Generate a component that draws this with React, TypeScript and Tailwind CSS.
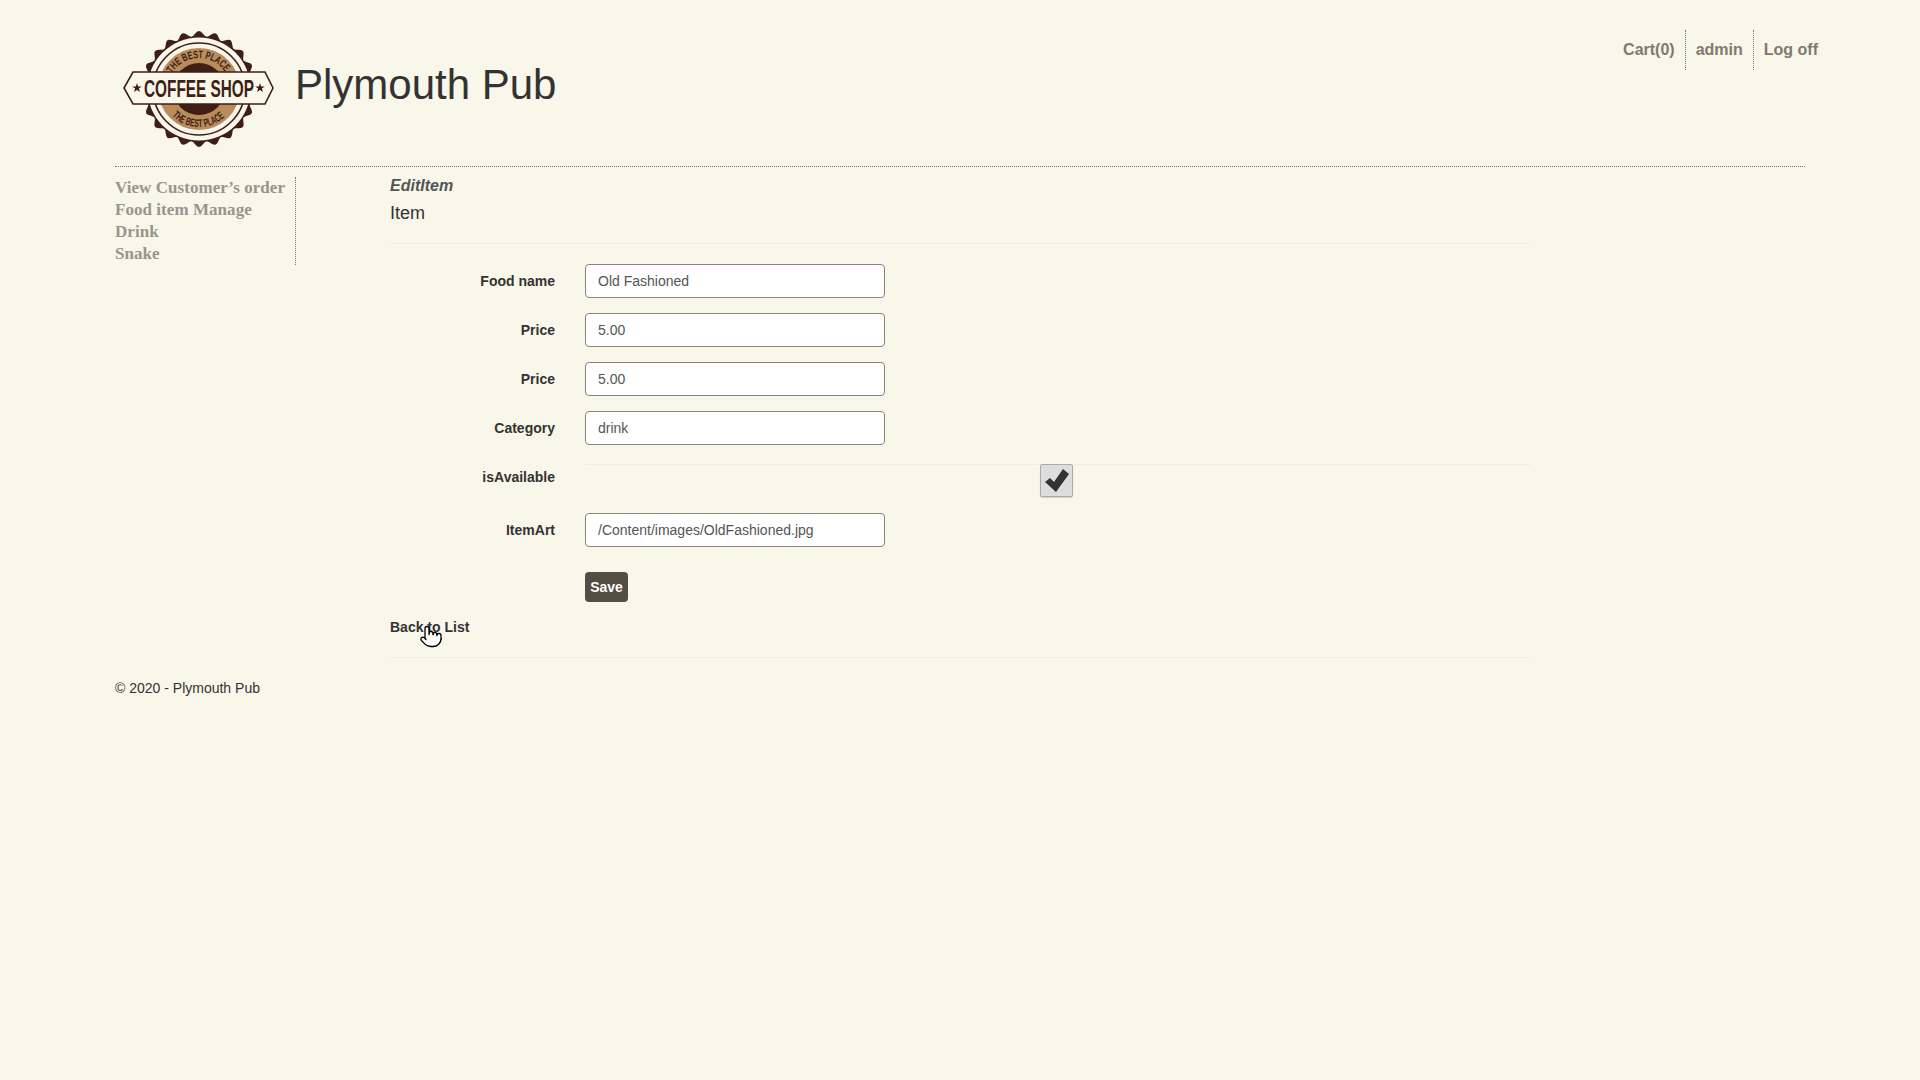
import React from "react";
import { Pointer } from "lucide-react";

const capPoints = () => {
  const pts: string[] = [];
  const teeth = 22;
  const steps = teeth * 8;
  for (let i = 0; i < steps; i++) {
    const a = (i / steps) * Math.PI * 2;
    const r = 55.5 + 2.6 * Math.cos(a * teeth);
    pts.push(`${(79 + r * Math.sin(a)).toFixed(2)},${(61 - r * Math.cos(a)).toFixed(2)}`);
  }
  return pts.join(" ");
};

// five pointed star, used on both ends of the banner
const starPoints = (cx: number, cy: number, r: number) => {
  const pts: string[] = [];
  for (let i = 0; i < 10; i++) {
    const a = (i / 10) * Math.PI * 2;
    const d = i % 2 === 0 ? r : r * 0.4;
    pts.push(`${(cx + d * Math.sin(a)).toFixed(2)},${(cy - d * Math.cos(a)).toFixed(2)}`);
  }
  return pts.join(" ");
};

const Logo = () => (
  <svg width="160" height="124" viewBox="0 0 160 124" className="shrink-0">
    <defs>
      <path id="arc-top" d="M 52.15 45.5 A 31 31 0 0 1 105.85 45.5" />
      <path id="arc-bottom" d="M 52.13 87.87 A 38 38 0 0 0 105.87 87.87" />
    </defs>
    <polygon points={capPoints()} fill="#3f1f15" />
    <circle cx="79" cy="61" r="51.5" fill="#f9f6ea" />
    <circle cx="79" cy="61" r="46" fill="none" stroke="#3f1f15" strokeWidth="1.6" />
    <circle cx="79" cy="61" r="41" fill="#b98c5c" />
    <circle cx="79" cy="61" r="26" fill="#3f1f15" />
    <text fill="#3f1f15" fontSize="11" fontWeight="700" fontFamily="'Liberation Sans', sans-serif">
      <textPath href="#arc-top" textLength="63" lengthAdjust="spacingAndGlyphs">THE BEST PLACE</textPath>
    </text>
    <text fill="#3f1f15" fontSize="11" fontWeight="700" fontFamily="'Liberation Sans', sans-serif">
      <textPath href="#arc-bottom" textLength="58" lengthAdjust="spacingAndGlyphs">THE BEST PLACE</textPath>
    </text>
    <polygon points="4,60 13,44 145,44 153,60 145,76 13,76" fill="#f9f6ea" stroke="#3f1f15" strokeWidth="1.6" />
    <text transform="translate(79 69) scale(0.64 1)" textAnchor="middle" fill="#3f1f15" fontSize="24" fontWeight="700" fontFamily="'Liberation Sans', sans-serif">COFFEE SHOP</text>
    <polygon points={starPoints(17, 60, 5)} fill="#3f1f15" />
    <polygon points={starPoints(140, 60, 5)} fill="#3f1f15" />
  </svg>
);

const Field = ({ label, value }: { label: string; value: string }) => (
  <div className="flex mb-[15px]">
    <label className="w-[165px] text-right text-sm leading-[20px] font-bold pt-[7px] text-[#333]">{label}</label>
    <input
      className="ml-[30px] w-[300px] h-[34px] px-3 text-sm leading-[20px] text-[#555] bg-white border border-[#8a8578] rounded"
      defaultValue={value}
    />
  </div>
);

const App = () => {
  return (
    <div className="min-h-screen bg-[#f9f6ea] text-[#333] font-['Liberation_Sans',sans-serif]">
      <header className="flex justify-between items-start pl-[120px] pr-[92px] h-[166px] pt-[28px]">
        <div className="flex items-center">
          <Logo />
          <h1 className="ml-[15px] -mt-[10px] text-[42px] leading-[46px] font-normal text-[#333]">Plymouth Pub</h1>
        </div>
        <nav className="flex mt-[2px] text-base font-bold text-[#7f7a6d] leading-[40px]">
          <a className="px-[10px] border-r border-dotted border-[#777]">Cart(0)</a>
          <a className="px-[10px] border-r border-dotted border-[#777]">admin</a>
          <a className="px-[10px]">Log off</a>
        </nav>
      </header>

      <div className="w-[1690px] ml-[115px] border-t border-dotted border-[#777]" />

      <div className="flex ml-[115px] mt-[10px]">
        <ul className="w-[181px] h-[88px] border-r border-dotted border-[#777] text-[17px] tracking-[0.05px] font-bold leading-[22px] text-[#9a958a] font-['Liberation_Serif',serif]">
          <li>View Customer’s order</li>
          <li>Food item Manage</li>
          <li>Drink</li>
          <li>Snake</li>
        </ul>

        <main className="ml-[94px] w-[1140px] relative">
          <h2 className="text-base italic font-bold leading-[18px] text-[#555]">EditItem</h2>
          <h4 className="mt-[6px] text-lg leading-[24px] text-[#333]">Item</h4>
          <hr className="mt-[18px] mb-[20px] border-[#efece0]" />

          <Field label="Food name" value="Old Fashioned" />
          <Field label="Price" value="5.00" />
          <Field label="Price" value="5.00" />
          <Field label="Category" value="drink" />

          <div className="flex mb-[15px] h-[38px]">
            <label className="w-[165px] text-right text-sm leading-[20px] font-bold pt-[7px] text-[#333]">isAvailable</label>
            <div className="ml-[30px] flex-1 pt-[4px]">
              <hr className="border-[#efece0]" />
              <div className="ml-[455px] -mt-[1px] w-[33px] h-[33px] flex items-center justify-center rounded-[2px] border border-[#aaa] bg-[#dddddd] shadow-[0_1px_1px_rgba(0,0,0,0.15)]">
                <svg width="24" height="23" viewBox="0 0 24 23" fill="#333">
                  <polygon points="0,13 5,9 9,13 18,0 24,5 11,23" />
                </svg>
              </div>
            </div>
          </div>

          <Field label="ItemArt" value="/Content/images/OldFashioned.jpg" />

          <div className="flex ml-[195px] mt-[25px]">
            <button className="w-[43px] h-[30px] rounded bg-[#544d44] text-white text-sm font-bold">Save</button>
          </div>

          <a className="block mt-[15px] text-sm font-bold leading-[20px] text-[#333]">Back to List</a>
          <Pointer className="absolute left-[29px] top-[446px] w-[24px] h-[27px] fill-white stroke-black" strokeWidth={1.3} />
          <hr className="mt-[20px] border-[#efece0]" />
        </main>
      </div>

      <footer className="ml-[115px] mt-[20px] text-sm leading-[20px] text-[#333]">© 2020 - Plymouth Pub</footer>
    </div>
  );
};

export default App;
